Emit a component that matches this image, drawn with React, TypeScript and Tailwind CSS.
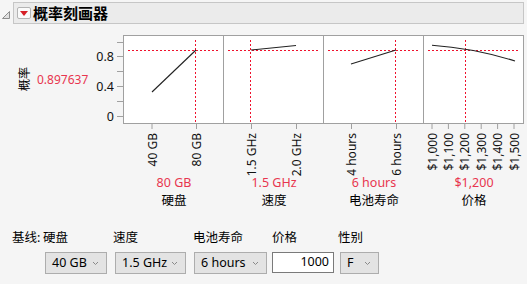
import React from 'react';

// 概率刻画器 — JMP-style prediction profiler

interface Factor {
  name: string;
  current: string;
  ticks: { x: number; label: string }[];
  vline: number;
  curve: string;
}

const RED = '#e8354f';
const LINE_RED = '#f0102c';
const HLINE = 14.5;

const factors: Factor[] = [
  {
    name: '硬盘',
    current: '80 GB',
    ticks: [
      { x: 28, label: '40 GB' },
      { x: 72.5, label: '80 GB' },
    ],
    vline: 71.5,
    curve: 'M28 56 L72 14',
  },
  {
    name: '速度',
    current: '1.5 GHz',
    ticks: [
      { x: 27.5, label: '1.5 GHz' },
      { x: 72.5, label: '2.0 GHz' },
    ],
    vline: 26.5,
    curve: 'M27 14 L72 9.5',
  },
  {
    name: '电池寿命',
    current: '6 hours',
    ticks: [
      { x: 27.5, label: '4 hours' },
      { x: 72.5, label: '6 hours' },
    ],
    vline: 71.5,
    curve: 'M27 28 L72 14',
  },
  {
    name: '价格',
    current: '$1,200',
    ticks: [
      { x: 8, label: '$1,000' },
      { x: 24.4, label: '$1,100' },
      { x: 40.8, label: '$1,200' },
      { x: 57.2, label: '$1,300' },
      { x: 73.6, label: '$1,400' },
      { x: 90, label: '$1,500' },
    ],
    vline: 41.5,
    curve: 'M8 9.3 Q49.5 12.2 91 25',
  },
];

const yTicks = [0, 0.2, 0.4, 0.6, 0.8, 1];

function Chevron() {
  return (
    <svg width="7" height="5" viewBox="0 0 7 5" className="shrink-0">
      <path d="M1 1 L3.5 3.5 L6 1" fill="none" stroke="#8a8a8a" strokeWidth="1" />
    </svg>
  );
}

function Select({ value, className }: { value: string; className: string }) {
  return (
    <div
      className={`flex h-[22px] items-center justify-between border border-[#adadad] bg-[#e3e3e3] pl-[6px] pr-[7px] text-[12.5px] text-black ${className}`}
    >
      <span>{value}</span>
      <Chevron />
    </div>
  );
}

function Panel({ f, first }: { f: Factor; first: boolean }) {
  return (
    <div
      className={`h-[89px] border-y border-r border-[#a0a0a0] bg-white ${first ? 'w-[101px] border-l' : 'w-[100px]'}`}
    >
      <svg width="99" height="87" viewBox="0 0 99 87" className="block">
        <line
          x1="4"
          x2="95"
          y1={HLINE}
          y2={HLINE}
          stroke={LINE_RED}
          strokeWidth="1"
          strokeDasharray="2 2"
          shapeRendering="crispEdges"
        />
        <line
          x1={f.vline}
          x2={f.vline}
          y1="4"
          y2="86"
          stroke={LINE_RED}
          strokeWidth="1"
          strokeDasharray="2 2"
          shapeRendering="crispEdges"
        />
        <path d={f.curve} fill="none" stroke="#222" strokeWidth="1.1" />
      </svg>
    </div>
  );
}

function XAxis({ f }: { f: Factor }) {
  return (
    <svg width="100" height="50" viewBox="0 0 100 50" className="block overflow-visible">
      {f.ticks.map((t) => (
        <g key={t.label}>
          <line x1={t.x} x2={t.x} y1="0" y2="5" stroke="#a0a0a0" />
          <text
            transform={`translate(${t.x} 9) rotate(-90)`}
            textAnchor="end"
            dominantBaseline="central"
            fontSize="12"
            fill="#111"
          >
            {t.label}
          </text>
        </g>
      ))}
    </svg>
  );
}

export default function App() {
  return (
    <div
      className="h-[284px] w-[527px] overflow-hidden bg-[#f5f5f5] pt-[2px] text-black"
      style={{ fontFamily: '"Segoe UI", "Noto Sans", "Noto Sans CJK SC", sans-serif' }}
    >
      {/* title bar */}
      <div className="flex h-[22px] items-center">
        <svg width="13" height="22" viewBox="0 0 13 22" className="shrink-0">
          <path d="M9.5 9.5 L9.5 16.5 L2.5 16.5 Z" fill="#e0e0e0" stroke="#8c8c8c" strokeWidth="1" />
        </svg>
        <div className="flex h-[22px] w-[511px] items-center border border-[#c6c6c6] bg-[#ebebeb]">
          <div className="ml-[3px] flex h-[12px] w-[14px] items-center justify-center rounded-[2px] border border-[#b4b4b4] bg-[#fafafa]">
            <svg width="8" height="5" viewBox="0 0 8 5">
              <path d="M0 0 L8 0 L4 5 Z" fill="#d61f26" />
            </svg>
          </div>
          <span className="ml-[2px] text-[15px] font-bold leading-none">概率刻画器</span>
        </div>
      </div>

      {/* profiler plots */}
      <div className="mt-[11px] flex">
        <div className="flex w-[123px] items-center">
          <span className="ml-[18px] rotate-180 text-[12px] leading-[14px] [text-orientation:sideways] [writing-mode:vertical-rl]">
            概率
          </span>
          <span className="ml-[5px] text-[12px]" style={{ color: RED }}>
            0.897637
          </span>
          <svg width="12" height="89" viewBox="0 0 12 89" className="ml-auto block overflow-visible">
            {yTicks.map((v) => {
              const y = Math.round(81 - 74.5 * v) + 0.5;
              return (
                <g key={v}>
                  <line x1="6" x2="12" y1={y} y2={y} stroke="#a0a0a0" />
                  {(v === 0 || v === 0.4 || v === 0.8) && (
                    <text x="3" y={y} textAnchor="end" dominantBaseline="central" fontSize="12.5" fill="#111">
                      {v}
                    </text>
                  )}
                </g>
              );
            })}
          </svg>
        </div>
        {factors.map((f, i) => (
          <Panel key={f.name} f={f} first={i === 0} />
        ))}
      </div>

      <div className="flex pl-[124px]">
        {factors.map((f) => (
          <XAxis key={f.name} f={f} />
        ))}
      </div>

      <div className="flex pl-[124px] text-[12.5px]">
        {factors.map((f) => (
          <div key={f.name} className="flex w-[100px] flex-col items-center">
            <span className="leading-[18px]" style={{ color: RED }}>
              {f.current}
            </span>
            <span className="leading-[18px]">{f.name}</span>
          </div>
        ))}
      </div>

      {/* baseline settings */}
      <div className="mt-[20px] flex pl-[12px] text-[12.5px]">
        <span className="w-[31px] leading-[16px]">基线:</span>
        <div className="flex w-[70px] flex-col">
          <span className="leading-[16px]">硬盘</span>
          <Select value="40 GB" className="ml-[2px] mt-[6px] w-[62px]" />
        </div>
        <div className="flex w-[80px] flex-col">
          <span className="leading-[16px]">速度</span>
          <Select value="1.5 GHz" className="ml-[2px] mt-[6px] w-[71px]" />
        </div>
        <div className="flex w-[79px] flex-col">
          <span className="leading-[16px]">电池寿命</span>
          <Select value="6 hours" className="ml-[1px] mt-[6px] w-[73px]" />
        </div>
        <div className="flex w-[66px] flex-col">
          <span className="leading-[16px]">价格</span>
          <div className="mt-[6px] flex h-[21px] w-[62px] items-center justify-end border border-[#7a7a7a] bg-white pr-[4px]">
            1000
          </div>
        </div>
        <div className="flex flex-col">
          <span className="leading-[16px]">性别</span>
          <Select value="F" className="ml-[2px] mt-[6px] w-[39px]" />
        </div>
      </div>
    </div>
  );
}
